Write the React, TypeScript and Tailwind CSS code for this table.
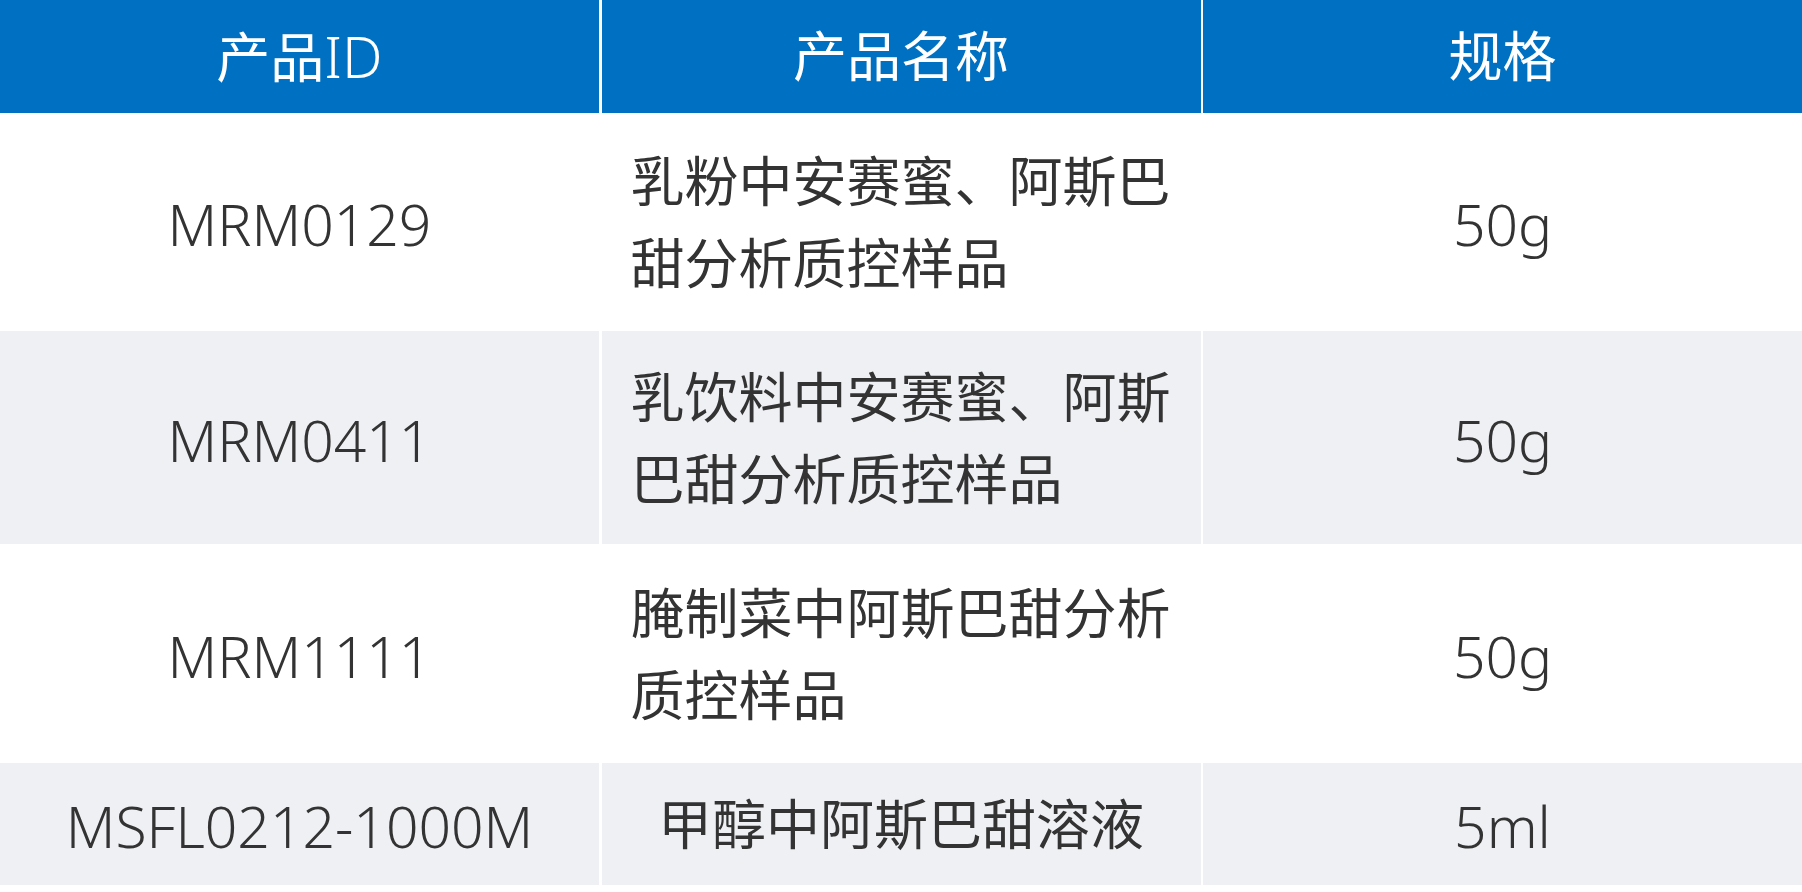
import React from "react";

const rows = [
  { id: "MRM0129", name: "乳粉中安赛蜜、阿斯巴甜分析质控样品", spec: "50g", tall: true, gray: false },
  { id: "MRM0411", name: "乳饮料中安赛蜜、阿斯巴甜分析质控样品", spec: "50g", tall: true, gray: true },
  { id: "MRM1111", name: "腌制菜中阿斯巴甜分析质控样品", spec: "50g", tall: true, gray: false },
  { id: "MSFL0212-1000M", name: "甲醇中阿斯巴甜溶液", spec: "5ml", tall: false, gray: true },
];

export default function App() {
  return (
    <div
      className="w-[1802px] h-[892px] bg-white overflow-hidden text-[54px] text-[#333333] font-normal"
      style={{ fontFamily: '"Noto Sans", "Noto Sans CJK SC", sans-serif' }}
    >
      <div className="grid grid-cols-3 gap-x-[2.5px] h-[112.5px]">
        <div className="bg-[#0071c2] text-white flex items-center justify-center">
          <span>产品<span className="text-[57px] font-[350]">ID</span></span>
        </div>
        <div className="bg-[#0071c2] text-white flex items-center justify-center">产品名称</div>
        <div className="bg-[#0071c2] text-white flex items-center justify-center">规格</div>
      </div>
      <div className="flex flex-col gap-y-[3px] pt-[2.5px]">
        {rows.map((r) => (
          <div
            key={r.id}
            className={
              "grid grid-cols-3 gap-x-[2.5px] " + (r.tall ? "h-[213px]" : "h-[122px]")
            }
          >
            <div className={(r.gray ? "bg-[#eff0f4] " : "bg-white ") + "flex items-center justify-center text-[57px] font-[350] pt-[6px]"}>
              {r.id}
            </div>
            <div className={(r.gray ? "bg-[#eff0f4] " : "bg-white ") + "flex items-center justify-center"}>
              <div className="max-w-[541px] text-left leading-[82px]">{r.name}</div>
            </div>
            <div className={(r.gray ? "bg-[#eff0f4] " : "bg-white ") + "flex items-center justify-center text-[57px] font-[350] pt-[6px]"}>
              {r.spec}
            </div>
          </div>
        ))}
      </div>
    </div>
  );
}
